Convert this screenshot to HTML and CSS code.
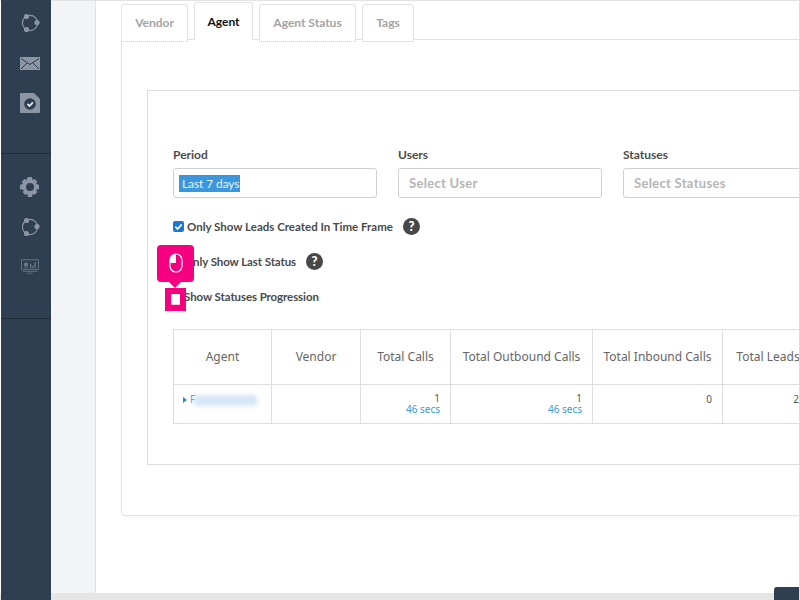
FILE: index.html
```html
<!DOCTYPE html>
<html lang="en">
<head>
<meta charset="utf-8">
<title>Agent report</title>
<link rel="stylesheet" href="styles.css">
</head>
<body>
<div class="app">
  <nav class="sidebar">
    <div class="nav-group top">
      <svg class="ico" viewBox="0 0 20 20"><circle cx="10" cy="10" r="7.6" class="ring"/><circle cx="6.5" cy="3.5" r="2.6"/><circle cx="17" cy="9.5" r="2.6"/><circle cx="6.5" cy="16.5" r="2.6"/></svg>
      <svg class="ico" viewBox="0 0 20 20"><rect y="4" width="20" height="13"/><path d="M1 5.500l9 6 9-6M1 16l6-6M19 16l-6-6" class="cut"/></svg>
      <svg class="ico" viewBox="0 0 20 20"><path d="M1 0h13l6 6v13a1 1 0 0 1-1 1H1a1 1 0 0 1-1-1V1a1 1 0 0 1 1-1z"/><circle cx="10" cy="11" r="5.800" fill="#2e3f52"/><path d="M7.500 11l2 2 3.400-3.600" class="tick"/></svg>
    </div>
    <div class="nav-group mid">
      <svg class="ico" viewBox="0 0 20 20"><path d="M8 0h4l.6 3 2-.9 2.800 2.800-1.600 2.100 3.200.8v4.400l-3.200.8 1.600 2.100-2.800 2.800-2-.9-.6 3H8l-.6-3-2 .9-2.800-2.800 1.600-2.100L0 12.200V7.800l3.200-.8-1.600-2.100 2.800-2.800 2 .9z"/><circle cx="10" cy="10" r="4" fill="#2e3f52"/></svg>
      <svg class="ico" viewBox="0 0 20 20"><circle cx="10" cy="10" r="7.6" class="ring"/><circle cx="6.5" cy="3.5" r="2.6"/><circle cx="17" cy="9.5" r="2.6"/><circle cx="6.5" cy="16.5" r="2.6"/></svg>
      <svg class="ico small" viewBox="0 0 20 16"><path d="M.5.5h19v11H.5z" class="ring"/><path d="M2 13h16v.8H2zM7 15h6v.8H7z"/><circle cx="5.5" cy="6" r="2.4"/><path d="M10 5h1.500v5H10zM12.500 7H14v3h-1.500zM15 3h1.500v7H15zM3 9h5v1H3z"/></svg>
    </div>
  </nav>
  <div class="rail"></div>
  <main class="main">
    <div class="tabs">
      <div class="tab">Vendor</div>
      <div class="tab active">Agent</div>
      <div class="tab">Agent Status</div>
      <div class="tab">Tags</div>
    </div>
    <section class="card">
      <div class="panel">
        <div class="filters">
          <div class="field">
            <label class="label">Period</label>
            <div class="input"><span class="selected">Last 7 days</span></div>
          </div>
          <div class="field">
            <label class="label">Users</label>
            <div class="input placeholder">Select User</div>
          </div>
          <div class="field">
            <label class="label">Statuses</label>
            <div class="input placeholder">Select Statuses</div>
          </div>
        </div>
        <div class="option first">
          <span class="check"><svg viewBox="0 0 12 12"><path d="M2.500 6.200l2.500 2.500 4.500-5"/></svg></span>
          <span class="option-text">Only Show Leads Created In Time Frame</span>
          <span class="help">?</span>
        </div>
        <div class="option second">
          <span class="option-text">Only Show Last Status</span>
          <span class="help">?</span>
        </div>
        <div class="option third">
          <span class="option-text">Show Statuses Progression</span>
        </div>
        <table class="report">
          <thead>
            <tr>
              <th class="c1">Agent</th>
              <th class="c2">Vendor</th>
              <th class="c3">Total Calls</th>
              <th class="c4">Total Outbound Calls</th>
              <th class="c5">Total Inbound Calls</th>
              <th class="c6">Total Leads</th>
            </tr>
          </thead>
          <tbody>
            <tr>
              <td class="agent"><span class="caret"></span><span class="name">F</span><span class="blur"></span></td>
              <td></td>
              <td class="num">1<a>46 secs</a></td>
              <td class="num">1<a>46 secs</a></td>
              <td class="num top">0</td>
              <td class="num top last">2</td>
            </tr>
          </tbody>
        </table>
      </div>
    </section>
    <div class="marker">
      <svg viewBox="0 0 14 20" class="mouse"><rect x="1" y="1" width="12" height="18" rx="6" class="m-line"/><path d="M7 1a6 6 0 0 0-6 6v3h6z" class="m-fill"/></svg>
    </div>
    <div class="hit"><span class="hit-mark"></span></div>
  </main>
</div>
<div class="corner"></div>
</body>
</html>
```
FILE: styles.css
```css
* { box-sizing: border-box; }
html, body { margin: 0; height: 600px; overflow: hidden; background: #fff; }
body { position: relative; font-family: "Lato", sans-serif; color: #4a4a4a; }

.app { display: flex; height: 593px; padding-left: 1px; border-top: 1px solid #e2e2e2; border-right: 1px solid #dcdcdc; overflow: hidden; }
body::after { content: ""; display: block; height: 7px; background: #e6e6e6; }

.sidebar { width: 50px; flex: none; background: #2e3f52; display: flex; flex-direction: column; align-items: center; position: fixed; top: 0; bottom: 0; left: 1px; z-index: 2; }
.nav-group { width: 100%; display: flex; flex-direction: column; align-items: center; padding-left: 8px; }
.nav-group.top { padding-top: 13px; gap: 20px; height: 154px; border-bottom: 1px solid #222d39; }
.nav-group.mid { padding-top: 23px; gap: 20px; height: 165px; border-bottom: 1px solid #222d39; }
.ico { width: 20px; height: 20px; fill: #8b95a3; flex: none; }
.ico.small { width: 18px; height: 15px; margin-top: 2px; fill: #6d7988; }
.ring { fill: none; stroke: #8b95a3; stroke-width: 1.200; }
.ico.small .ring { stroke: #6d7988; stroke-width: 1; }
.cut { fill: none; stroke: #2e3f52; stroke-width: 1; }
.tick { fill: none; stroke: #e6e9ec; stroke-width: 1.800; }

.rail { margin-left: 50px; width: 45px; background: #f2f4f6; border-right: 1px solid #dfe1e4; flex: none; }

.main { flex: 1; min-width: 0; padding-left: 25px; position: relative; }

.tabs { display: flex; gap: 6px; height: 40px; align-items: flex-start; position: relative; z-index: 1; margin-bottom: -2px; }
.tab { height: 38px; margin-top: 3px; background: #fff; border: 1px solid #e3e3e3; border-radius: 3px 3px 0 0; border-bottom: 1px dotted #cfcfcf; color: #a3a3a3; font-weight: 700; font-size: 12px; line-height: 36px; text-align: center; }
.tab:nth-child(1) { width: 67px; }
.tab:nth-child(2) { width: 59px; height: 38px; margin-top: 1px; color: #111; border-bottom: 0; line-height: 37px; }
.tab:nth-child(3) { width: 97px; }
.tab:nth-child(4) { width: 52px; border-bottom: 1px solid #e3e3e3; }

.card { width: 700px; height: 477px; background: #fff; border: 1px solid #e3e3e3; border-radius: 5px; padding: 50px 0 0 25px; box-shadow: 0 1px 2px rgba(0,0,0,.04); }
.panel { width: 700px; height: 375px; border: 1px solid #dedede; padding: 57px 0 0 25px; }

.filters { display: flex; gap: 21px; }
.field { width: 204px; flex: none; }
.label { display: block; font-size: 12px; font-weight: 700; line-height: 14px; margin-bottom: 6px; color: #4d4d4d; }
.input { height: 30px; border: 1px solid #d0d0d0; border-radius: 3px; padding: 6px; font-size: 12px; line-height: 17px; background: #fff; }
.placeholder { color: #b5b5b5; font-size: 13px; font-weight: 700; letter-spacing: .3px; padding-left: 10px; }
.selected { display: inline-block; background: #3b97dc; color: #e9f3fb; padding: 0 1px 0 3px; line-height: 17px; letter-spacing: -.1px; margin-left: -1px; }

.option { display: flex; align-items: center; font-size: 11.500px; font-weight: 700; color: #4a4a4a; height: 18px; }
.option.first { margin-top: 19px; }
.option.second { margin-top: 17px; padding-left: 11px; }
.option.third { margin-top: 17px; padding-left: 11px; }
.second .option-text, .third .option-text { letter-spacing: -.09px; }
.check { width: 11px; height: 11px; border-radius: 2px; background: #1c76d2; margin-right: 3px; display: flex; flex: none; }
.check svg { width: 11px; height: 11px; fill: none; stroke: #fff; stroke-width: 1.800; }
.help { width: 17px; height: 17px; border-radius: 50%; background: #474747; color: #fff; font-size: 13px; font-weight: 900; line-height: 17px; text-align: center; margin-left: 10px; flex: none; }

.report { margin-top: 24px; border-collapse: collapse; table-layout: fixed; width: 640px; font-family: "Noto Sans", sans-serif; font-size: 12px; color: #666; border: 1px solid #e0e0e0; }
.report th, .report td { border: 1px solid #dfdfdf; padding: 0; }
.report th { height: 55px; font-weight: 400; text-align: center; white-space: nowrap; padding-bottom: 2px; }
.report td { height: 39px; vertical-align: middle; }
.c1 { width: 98px; } .c2 { width: 89px; } .c3 { width: 90px; } .c4 { width: 142px; } .c5 { width: 130px; } .c6 { width: 91px; }
.report .num { text-align: right; padding-right: 10px; font-size: 10px; line-height: 11px; color: #555; }
.num a { display: block; color: #3b97dc; }
.report .num.top { vertical-align: top; padding-top: 9px; }
.report .num.last { padding-right: 14px; }
.report .agent { padding: 8px 0 0 9px; vertical-align: top; font-size: 10px; line-height: 12px; color: #3b97dc; white-space: nowrap; }
.caret { display: inline-block; border-left: 4px solid #2f86c9; border-top: 3px solid transparent; border-bottom: 3px solid transparent; margin-right: 3px; }
.name { color: #3b97dc; }
.blur { display: inline-block; width: 63px; height: 11px; margin-left: -1px; background: #d6e6f6; filter: blur(2px); vertical-align: -3px; }

.marker { position: absolute; left: 61px; top: 244px; width: 37px; height: 37px; background: #f5007e; border-radius: 4px; display: flex; align-items: center; justify-content: center; z-index: 3; }
.marker::after { content: ""; position: absolute; left: 12px; bottom: -6px; border-left: 6px solid transparent; border-right: 6px solid transparent; border-top: 6px solid #f5007e; }
.mouse { width: 14px; height: 20px; margin-top: -1px; }
.m-line { fill: none; stroke: #fff; stroke-width: 1.200; }
.m-fill { fill: #fff; }
.hit { position: absolute; left: 69px; top: 287px; width: 21px; height: 23px; background: #f5007e; display: flex; align-items: center; justify-content: center; z-index: 3; }
.hit-mark { width: 9px; height: 11px; background: #fff; border-left: 1px solid #ffc4e2; border-bottom: 1px solid #ffc4e2; }
.corner { position: absolute; right: 1px; bottom: 0; width: 25px; height: 13px; background: #2e3f52; border-top-left-radius: 3px; z-index: 4; }
```
